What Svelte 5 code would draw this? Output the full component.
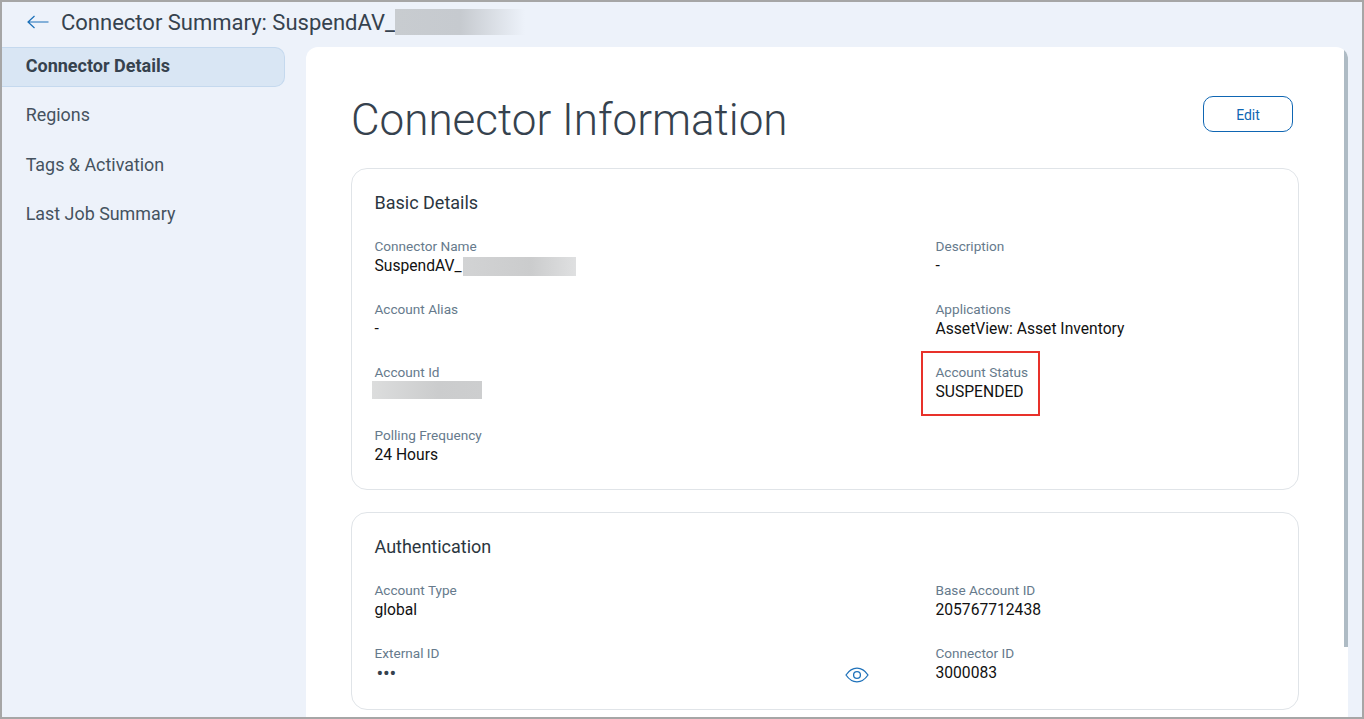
<script lang="ts">
    const nav = ['Connector Details', 'Regions', 'Tags & Activation', 'Last Job Summary'];
    const basic = [
        { label: 'Connector Name', value: 'SuspendAV_', blur: 'name' },
        { label: 'Description', value: '-' },
        { label: 'Account Alias', value: '-' },
        { label: 'Applications', value: 'AssetView: Asset Inventory' },
        { label: 'Account Id', value: '', blur: 'id' },
        { label: 'Account Status', value: 'SUSPENDED', marked: true },
        { label: 'Polling Frequency', value: '24 Hours' }
    ];
    const auth = [
        { label: 'Account Type', value: 'global' },
        { label: 'Base Account ID', value: '205767712438' },
        { label: 'External ID', value: '•••', secret: true },
        { label: 'Connector ID', value: '3000083' }
    ];
</script>

{#snippet fields(items)}
    <div class="fields">
        {#each items as f}
            <div class="field">
                <div class="label">{f.label}</div>
                <div class="value" class:dots={f.secret}>
                    {f.value}
                    {#if f.blur === 'name'}<span class="blur blur-name"></span>{/if}
                    {#if f.blur === 'id'}<span class="blur blur-id"></span>{/if}
                </div>
                {#if f.marked}<span class="marker"></span>{/if}
                {#if f.secret}
                    <svg class="eye" width="24" height="16" viewBox="0 0 24 16" fill="none" stroke="#1f72ba" stroke-width="1.3">
                        <path d="M1 8C4 3.6 7.8 1.2 12 1.2S20 3.6 23 8c-3 4.4-6.8 6.8-11 6.8S4 12.4 1 8Z"/>
                        <circle cx="12" cy="8" r="3.4"/>
                    </svg>
                {/if}
            </div>
        {/each}
    </div>
{/snippet}

<div class="page">
    <header class="topbar">
        <svg class="back" width="22" height="14" viewBox="0 0 22 14" fill="none" stroke="#1a6fb8" stroke-width="1.2">
            <path d="M21.5 7H1M7.5 1 1 7l6.5 6"/>
        </svg>
        <h1>Connector Summary: SuspendAV_</h1>
        <span class="blur blur-title"></span>
    </header>
    <div class="body">
        <nav class="sidebar">
            {#each nav as item, i}
                <div class="nav-item" class:active={i === 0}>{item}</div>
            {/each}
        </nav>
        <main class="card">
            <div class="title-row">
                <h2>Connector Information</h2>
                <button class="edit">Edit</button>
            </div>
            <section>
                <h3>Basic Details</h3>
                {@render fields(basic)}
            </section>
            <section>
                <h3>Authentication</h3>
                {@render fields(auth)}
            </section>
            <div class="scrollbar"></div>
        </main>
    </div>
</div>

<style>
    :global(body) {
        margin: 0;
        overflow: hidden;
    }

    .page {
        box-sizing: border-box;
        width: 1364px;
        height: 719px;
        border: 2px solid #a6a6a6;
        background: #edf2fa;
        font-family: Roboto, sans-serif;
        display: flex;
        flex-direction: column;
        overflow: hidden;
    }

    .topbar {
        height: 45px;
        flex: none;
        display: flex;
        align-items: center;
        padding: 0 0 5px 25px;
        box-sizing: border-box;
    }

    .back {
        margin-right: 12px;
    }

    .topbar h1 {
        margin: 0;
        font-size: 22px;
        font-weight: 400;
        color: #36424e;
    }

    .blur {
        display: inline-block;
    }

    .blur-title {
        width: 130px;
        height: 26px;
        background: linear-gradient(90deg, #c8ccd0 0%, #c6cacf 50%, #edf2fa 100%);
    }

    .body {
        flex: 1;
        min-height: 0;
        display: flex;
    }

    .sidebar {
        width: 304px;
        flex: none;
        box-sizing: border-box;
        padding-right: 21px;
        display: flex;
        flex-direction: column;
        gap: 9.4px;
    }

    .nav-item {
        height: 40px;
        line-height: 36px;
        box-sizing: border-box;
        padding-left: 23.7px;
        font-size: 17.9px;
        color: #45525f;
        border: 1px solid transparent;
        border-left: none;
    }

    .nav-item.active {
        background: #d9e6f4;
        border-color: #c5d9ee;
        border-radius: 0 10px 10px 0;
        font-size: 18px;
        font-weight: 700;
        color: #36424e;
    }

    .card {
        width: 1042px;
        flex: none;
        background: #fff;
        border-radius: 12px 12px 0 0;
        box-sizing: border-box;
        padding: 0 49px 0 45px;
        position: relative;
        overflow: hidden;
    }

    .title-row {
        height: 121px;
        display: flex;
        justify-content: space-between;
        align-items: flex-start;
    }

    h2 {
        margin: 42px 0 0;
        font-size: 44px;
        line-height: 62px;
        font-weight: 300;
        color: #36424e;
    }

    .edit {
        width: 90px;
        height: 36px;
        margin: 49px 6px 0 0;
        padding: 2px 0 0;
        border: 1.5px solid #0f66b3;
        border-radius: 10px;
        background: #fff;
        color: #0f66b3;
        font-family: inherit;
        font-size: 14px;
    }

    section {
        border: 1px solid #e0e4e8;
        border-radius: 16px;
        padding: 22px 22px 24px 22.5px;
        margin-bottom: 22px;
    }

    section + section {
        padding-bottom: 26px;
    }

    h3 {
        margin: 0 0 21px;
        font-size: 18px;
        line-height: 24px;
        font-weight: 400;
        color: #2b3640;
    }

    .fields {
        display: grid;
        grid-template-columns: 561px 1fr;
        row-gap: 23px;
    }

    .field {
        position: relative;
    }

    .label {
        font-size: 13.6px;
        line-height: 20px;
        color: #667a8c;
    }

    .value {
        box-sizing: border-box;
        padding-top: 0.5px;
        font-size: 15.65px;
        line-height: 20px;
        height: 20px;
        color: #111;
        display: flex;
        align-items: center;
    }

    .value.dots {
        padding-left: 2px;
        font-size: 20px;
        letter-spacing: -0.2px;
        color: #36424e;
    }

    .blur-name {
        width: 113px;
        height: 19px;
        margin-left: 1px;
        background: linear-gradient(90deg, #d2d3d4 0%, #cbcccd 60%, #dfe0e1 100%);
    }

    .blur-id {
        width: 110px;
        height: 18px;
        margin: 0 0 5px -3px;
        background: linear-gradient(90deg, #dcdddd 0%, #cbcccd 60%, #cdcecf 100%);
    }

    .marker {
        position: absolute;
        left: -15px;
        top: -11px;
        width: 115px;
        height: 61px;
        border: 2px solid #e8312a;
    }

    .eye {
        position: absolute;
        left: 470px;
        top: 24px;
    }

    .scrollbar {
        position: absolute;
        top: 0;
        right: 0;
        width: 4px;
        height: 600px;
        background: #aebbc4;
        border-radius: 2px 2px 0 0;
    }
</style>
